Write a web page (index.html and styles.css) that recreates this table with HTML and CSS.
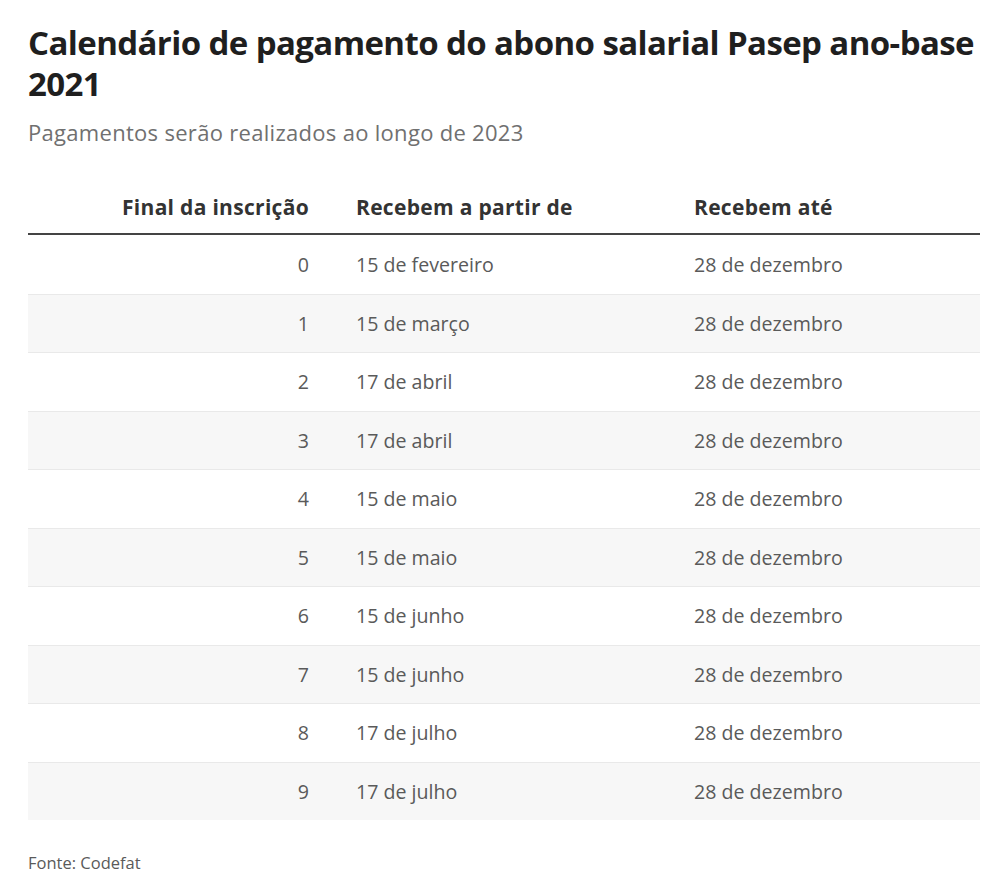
FILE: index.html
```html
<!DOCTYPE html>
<html lang="pt-BR">
<head>
<meta charset="utf-8">
<title>Calendário Pasep</title>
<link rel="stylesheet" href="styles.css">
</head>
<body>
<main class="chart">
  <h1 class="title">Calendário de pagamento do abono salarial Pasep ano-base 2021</h1>
  <p class="subtitle">Pagamentos serão realizados ao longo de 2023</p>
  <div class="table">
    <div class="row head">
      <div class="cell num">Final da inscrição</div>
      <div class="cell">Recebem a partir de</div>
      <div class="cell">Recebem até</div>
    </div>
    <div class="row"><div class="cell num">0</div><div class="cell">15 de fevereiro</div><div class="cell">28 de dezembro</div></div>
    <div class="row"><div class="cell num">1</div><div class="cell">15 de março</div><div class="cell">28 de dezembro</div></div>
    <div class="row"><div class="cell num">2</div><div class="cell">17 de abril</div><div class="cell">28 de dezembro</div></div>
    <div class="row"><div class="cell num">3</div><div class="cell">17 de abril</div><div class="cell">28 de dezembro</div></div>
    <div class="row"><div class="cell num">4</div><div class="cell">15 de maio</div><div class="cell">28 de dezembro</div></div>
    <div class="row"><div class="cell num">5</div><div class="cell">15 de maio</div><div class="cell">28 de dezembro</div></div>
    <div class="row"><div class="cell num">6</div><div class="cell">15 de junho</div><div class="cell">28 de dezembro</div></div>
    <div class="row"><div class="cell num">7</div><div class="cell">15 de junho</div><div class="cell">28 de dezembro</div></div>
    <div class="row"><div class="cell num">8</div><div class="cell">17 de julho</div><div class="cell">28 de dezembro</div></div>
    <div class="row"><div class="cell num">9</div><div class="cell">17 de julho</div><div class="cell">28 de dezembro</div></div>
  </div>
  <p class="source">Fonte: Codefat</p>
</main>
</body>
</html>
```

FILE: styles.css
```css
html, body {
  margin: 0;
  padding: 0;
  background: #ffffff;
}

body {
  font-family: "Open Sans", "Liberation Sans", sans-serif;
  color: #5a5a5a;
}

.chart {
  width: 952px;
  padding: 22px 0 0 28px;
}

.title {
  margin: 0;
  font-size: 33px;
  line-height: 41px;
  font-weight: 700;
  letter-spacing: -0.6px;
  color: #1f1f1f;
}

.subtitle {
  margin: 14px 0 0;
  font-size: 22px;
  line-height: 28px;
  letter-spacing: 0.3px;
  color: #707070;
}

.table {
  margin-top: 47px;
}

.row {
  display: grid;
  grid-template-columns: 281px 338px 1fr;
  align-items: center;
  height: 58.5px;
  box-sizing: border-box;
  border-top: 1px solid #e9e9e9;
  font-size: 19.6px;
  color: #5a5a5a;
}

.row:nth-child(odd) {
  background: #f7f7f7;
}

.row.head {
  height: auto;
  border-top: none;
  border-bottom: 2px solid #444444;
  padding-bottom: 12px;
  align-items: end;
  font-size: 21px;
  line-height: 28px;
  letter-spacing: 0.3px;
  font-weight: 700;
  color: #333333;
  background: none;
}

.row.head + .row {
  border-top: none;
}

.cell {
  padding-left: 47px;
  white-space: nowrap;
}

.cell.num {
  padding-left: 0;
  text-align: right;
}

.source {
  margin: 32px 0 0;
  font-size: 16.5px;
  line-height: 22px;
  color: #5a5a5a;
}
```
